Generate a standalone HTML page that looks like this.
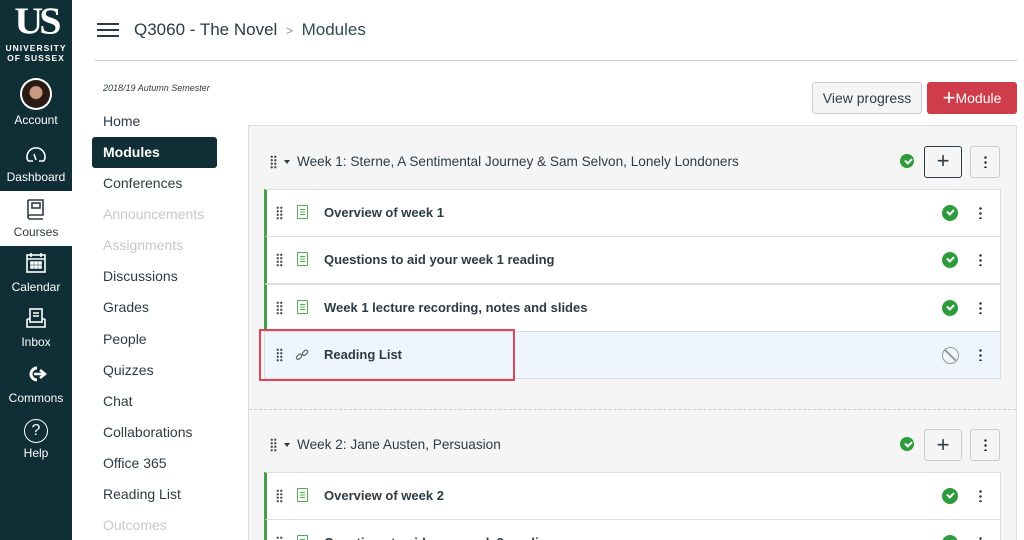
<!DOCTYPE html>
<html style="width:1024px;height:540px;overflow:hidden"><head><meta charset="utf-8"><style>
*{box-sizing:border-box;margin:0;padding:0}
body{width:1024px;height:540px;overflow:hidden;background:#fff;font-family:"Liberation Sans",sans-serif;position:relative;color:#2d3b45}
.side{position:absolute;left:0;top:0;width:72px;height:540px;background:#0f2e35}
.ab{position:absolute;left:0;width:72px;text-align:center;color:#fff;font-size:12px}
.abs{position:absolute}
.nav{position:absolute;left:103px;font-size:14px;color:#2d3b45}
.nav.dis{color:#c4c8cb}
.row{position:absolute;left:264px;width:737px;height:48px;background:#fff;border:1px solid #ddd;border-left:3px solid #43a047}
.row .t{position:absolute;left:57px;top:15px;font-size:13px;font-weight:bold;color:#2d3b45}
.grip{position:absolute;width:7px;height:14px;background-image:radial-gradient(circle,#555 1px,transparent 1.3px);background-size:3.5px 3.5px}
.chk{position:absolute;width:16px;height:16px;border-radius:50%;background:#2e9c3c}
.chk::after{content:"";position:absolute;left:4.5px;top:3.5px;width:5px;height:3px;border-left:2px solid #fff;border-bottom:2px solid #fff;transform:rotate(-45deg)}
.keb{position:absolute;width:3px;height:13px;background-image:radial-gradient(circle,#2d3b45 1.2px,transparent 1.4px);background-size:3px 5px}
.doc{position:absolute;width:11px;height:14px;border:1.3px solid #4caf50;border-radius:1px}
.doc::after{content:"";position:absolute;left:2px;top:3px;width:5px;height:6px;background:repeating-linear-gradient(#4caf50 0 1px,transparent 1px 2.5px)}
</style></head><body>
<div class="side">
 <div class="ab" style="top:0px;font-family:'Liberation Serif',serif;font-size:40px;font-weight:bold;letter-spacing:-4px;line-height:42px;transform:scaleY(0.95)">US</div>
 <div class="ab" style="top:43px;font-size:8.5px;font-weight:bold;letter-spacing:1px;line-height:10px">UNIVERSITY<br>OF SUSSEX</div>
 <div class="abs" style="left:20px;top:78px;width:32px;height:32px;border-radius:50%;background:#fff;padding:2px"><div style="width:28px;height:28px;border-radius:50%;background:radial-gradient(circle at 50% 45%,#c99a80 0 6px,#2a1a14 7px)"></div></div>
 <div class="ab" style="top:113px">Account</div>
 <svg class="abs" style="left:24px;top:145px" width="24" height="18" viewBox="0 0 24 18" fill="none" stroke="#fff" stroke-width="1.6"><path d="M4 16A9 9 0 1 1 20 16"/><path d="M4 16H9M15 16H20M12 15L10 9"/></svg>
 <div class="ab" style="top:170px">Dashboard</div>
 <div class="abs" style="left:0;top:191px;width:72px;height:55px;background:#fff"></div>
 <svg class="abs" style="left:26px;top:198px" width="20" height="22" viewBox="0 0 20 22" fill="none" stroke="#2d3b45" stroke-width="1.6"><path d="M2 2H17V17H4A2 2 0 0 0 4 21H17M2 2V19"/><rect x="6" y="5" width="8" height="5"/></svg>
 <div class="ab" style="top:225px;color:#2d3b45">Courses</div>
 <svg class="abs" style="left:25px;top:252px" width="22" height="22" viewBox="0 0 22 22" fill="none" stroke="#fff" stroke-width="1.6"><rect x="2" y="3" width="18" height="17"/><path d="M2 7H20M6 1V5M16 1V5"/><path d="M6 10h2v2H6zM10 10h2v2h-2zM14 10h2v2h-2zM6 14h2v2H6zM10 14h2v2h-2zM14 14h2v2h-2z" fill="#fff"/></svg>
 <div class="ab" style="top:280px">Calendar</div>
 <svg class="abs" style="left:25px;top:307px" width="22" height="22" viewBox="0 0 22 22" fill="none" stroke="#fff" stroke-width="1.6"><rect x="5" y="2" width="12" height="13"/><path d="M8 6H14M8 9H14M2 12V20H20V12M2 12H5M17 12H20"/></svg>
 <div class="ab" style="top:335px">Inbox</div>
 <svg class="abs" style="left:24px;top:365px" width="24" height="18" viewBox="0 0 24 18" fill="none" stroke="#fff" stroke-width="3"><path d="M13 3A6 6 0 1 0 13 15"/><path d="M10 9H20M16 5L21 9L16 13" stroke-width="2.5"/></svg>
 <div class="ab" style="top:391px">Commons</div>
 <div class="abs" style="left:24px;top:419px;width:24px;height:24px;border:1.6px solid #fff;border-radius:50%;color:#fff;text-align:center;font-size:16px;line-height:21px">?</div>
 <div class="ab" style="top:446px">Help</div>
</div>

<div class="abs" style="left:97px;top:23px;width:22px;height:2px;background:#2d3b45;box-shadow:0 6px 0 #2d3b45,0 12px 0 #2d3b45"></div>
<div class="abs" style="left:134px;top:20px;font-size:17px;color:#2d3b45">Q3060 - The Novel <span style="color:#999;font-size:13px">&nbsp;&gt;&nbsp;</span> <span style="color:#2d4a55">Modules</span></div>
<div class="abs" style="left:95px;top:60px;width:922px;height:1px;background:#c7cdd1"></div>

<div class="abs" style="left:103px;top:83px;font-size:9px;font-style:italic;color:#2d3b45">2018/19 Autumn Semester</div>
<div class="abs" style="left:92px;top:137px;width:125px;height:31px;background:#0f2e35;border-radius:3px"></div>
<div class="nav" style="top:113px">Home</div>
<div class="nav" style="top:144px;color:#fff;font-weight:bold">Modules</div>
<div class="nav" style="top:175px">Conferences</div>
<div class="nav dis" style="top:206px">Announcements</div>
<div class="nav dis" style="top:237px">Assignments</div>
<div class="nav" style="top:268px">Discussions</div>
<div class="nav" style="top:299px">Grades</div>
<div class="nav" style="top:331px">People</div>
<div class="nav" style="top:362px">Quizzes</div>
<div class="nav" style="top:393px">Chat</div>
<div class="nav" style="top:424px">Collaborations</div>
<div class="nav" style="top:455px">Office 365</div>
<div class="nav" style="top:486px">Reading List</div>
<div class="nav dis" style="top:517px">Outcomes</div>

<div class="abs" style="left:812px;top:82px;width:110px;height:32px;background:#f5f5f5;border:1px solid #c7cdd1;border-radius:3px;font-size:14px;text-align:center;line-height:30px;color:#2d3b45">View progress</div>
<div class="abs" style="left:927px;top:82px;width:90px;height:32px;background:#d03d4a;border-radius:3px;font-size:14px;text-align:center;line-height:32px;color:#fff"><span style="font-size:22px;font-weight:300;vertical-align:-2px">+</span>Module</div>

<div class="abs" style="left:248px;top:125px;width:769px;height:415px;background:#f5f5f5;border:1px solid #ddd;border-bottom:none"></div>
<div class="abs" style="left:249px;top:409px;width:767px;height:0;border-top:1px dashed #c7cdd1"></div>

<!-- week 1 -->
<div class="grip" style="left:270px;top:155px"></div>
<div class="abs" style="left:284px;top:160px;border:3.5px solid transparent;border-top:4px solid #2d3b45"></div>
<div class="abs" style="left:297px;top:154px;font-size:13.6px;color:#2d3b45">Week 1: Sterne, A Sentimental Journey &amp; Sam Selvon, Lonely Londoners</div>
<div class="chk" style="left:900px;top:154px;width:14px;height:14px"></div>
<div class="abs" style="left:924px;top:146px;width:38px;height:32px;border:1.5px solid #2d3b45;border-radius:3px;background:#f5f5f5;text-align:center;font-size:22px;line-height:28px;font-weight:300">+</div>
<div class="abs" style="left:970px;top:146px;width:30px;height:32px;border:1px solid #c7cdd1;border-radius:3px;background:#f5f5f5"></div>
<div class="keb" style="left:984px;top:155px"></div>

<div class="row" style="top:189px"><div class="grip" style="left:9px;top:16px"></div><div class="doc" style="left:30px;top:15px"></div><div class="t">Overview of week 1</div><div class="chk" style="left:675px;top:15px"></div><div class="keb" style="left:712px;top:16px"></div></div>
<div class="row" style="top:236px"><div class="grip" style="left:9px;top:16px"></div><div class="doc" style="left:30px;top:15px"></div><div class="t">Questions to aid your week 1 reading</div><div class="chk" style="left:675px;top:15px"></div><div class="keb" style="left:712px;top:16px"></div></div>
<div class="row" style="top:284px"><div class="grip" style="left:9px;top:16px"></div><div class="doc" style="left:30px;top:15px"></div><div class="t">Week 1 lecture recording, notes and slides</div><div class="chk" style="left:675px;top:15px"></div><div class="keb" style="left:712px;top:16px"></div></div>
<div class="row" style="top:331px;background:#eef5fc;border-left:1px solid #ddd"><div class="grip" style="left:11px;top:16px"></div>
 <svg class="abs" style="left:30px;top:16px" width="14" height="14" viewBox="0 0 14 14" fill="none" stroke="#666" stroke-width="1.2"><rect x="1" y="7" width="6" height="3.5" rx="1.7" transform="rotate(-45 4 8.7)"/><rect x="7" y="3" width="6" height="3.5" rx="1.7" transform="rotate(-45 10 4.7)"/></svg>
 <div class="t" style="left:59px">Reading List</div>
 <div class="abs" style="left:677px;top:15px;width:17px;height:17px;border:1.5px solid #999;border-radius:50%"><div style="position:absolute;left:6px;top:-1px;width:1.5px;height:16px;background:#999;transform:rotate(-45deg)"></div></div>
 <div class="keb" style="left:714px;top:16px"></div></div>
<div class="abs" style="left:259px;top:329px;width:256px;height:52px;border:2px solid #e0445a"></div>

<!-- week 2 -->
<div class="grip" style="left:270px;top:438px"></div>
<div class="abs" style="left:284px;top:443px;border:3.5px solid transparent;border-top:4px solid #2d3b45"></div>
<div class="abs" style="left:297px;top:437px;font-size:13.6px;color:#2d3b45">Week 2: Jane Austen, Persuasion</div>
<div class="chk" style="left:900px;top:437px;width:14px;height:14px"></div>
<div class="abs" style="left:924px;top:429px;width:38px;height:32px;border:1px solid #c7cdd1;border-radius:3px;background:#f5f5f5;text-align:center;font-size:22px;line-height:29px;font-weight:300">+</div>
<div class="abs" style="left:970px;top:429px;width:30px;height:32px;border:1px solid #c7cdd1;border-radius:3px;background:#f5f5f5"></div>
<div class="keb" style="left:984px;top:438px"></div>
<div class="row" style="top:472px"><div class="grip" style="left:9px;top:16px"></div><div class="doc" style="left:30px;top:15px"></div><div class="t">Overview of week 2</div><div class="chk" style="left:675px;top:15px"></div><div class="keb" style="left:712px;top:16px"></div></div>
<div class="row" style="top:519px;height:21px;border-bottom:none"><div class="grip" style="left:9px;top:16px"></div><div class="doc" style="left:30px;top:15px"></div><div class="t">Questions to aid your week 2 reading</div><div class="chk" style="left:675px;top:15px"></div><div class="keb" style="left:712px;top:16px"></div></div>
</body></html>
